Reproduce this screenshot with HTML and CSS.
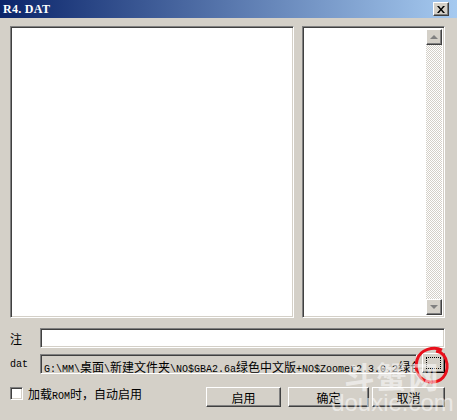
FILE: index.html
```html
<!DOCTYPE html>
<html lang="zh-CN">
<head>
    <meta charset="UTF-8">
    <title>R4. DAT</title>
    <link rel="stylesheet" href="styles.css">
</head>
<body>
    <div class="window">
        <div class="titlebar">
            <span class="title">R4. DAT</span>
            <button class="close-btn">
                <svg width="8" height="7" viewBox="0 0 8 7"><path d="M0 0h2l2 2.5 2-2.5h2l-3 3.5 3 3.5h-2l-2-2.5-2 2.5h-2l3-3.5z" fill="#000"/></svg>
            </button>
        </div>

        <div class="content">
            <div class="lists">
                <div class="listbox main-list"></div>
                <div class="listbox side-list">
                    <div class="scrollbar">
                        <div class="scroll-btn"><span class="arrow up"></span></div>
                        <div class="scroll-track"></div>
                        <div class="scroll-btn"><span class="arrow down"></span></div>
                    </div>
                </div>
            </div>

            <div class="field-row note-row">
                <label class="field-label">注</label>
                <div class="textbox"></div>
            </div>

            <div class="field-row dat-row">
                <label class="field-label mono">dat</label>
                <div class="textbox disabled">
                    <span class="path">G:\MM\<span class="cjk">桌面</span>\<span class="cjk">新建文件夹</span>\NO$GBA2.6a<span class="cjk">绿色中文版</span>+NO$Zoomer2.3.0.2<span class="cjk">绿色</span></span>
                </div>
                <button class="browse-btn"><span class="focus"></span></button>
            </div>

            <div class="bottom-row">
                <label class="check">
                    <span class="checkbox"></span>
                    <span class="check-text">加载<span class="mono">ROM</span>时，自动启用</span>
                </label>
                <div class="buttons">
                    <button class="btn btn-enable">启用</button>
                    <button class="btn btn-ok">确定</button>
                    <button class="btn btn-cancel">取消</button>
                </div>
            </div>
        </div>

        <!-- red mark drawn over the browse button -->
        <svg class="mark" width="40" height="42" viewBox="0 0 40 42">
            <path d="M30 5 C22 1 8 4 5 15 C2 26 8 36 18 37 C29 38 36 30 35 19 C34 11 30 7 24 6" fill="none" stroke="#e8101c" stroke-width="3"/>
        </svg>

        <div class="watermark">
            <div class="wm-big">斗蟹网</div>
            <div class="wm-small">douxie.com</div>
        </div>
    </div>
</body>
</html>
```

FILE: styles.css
```css
body {
    margin: 0;
    padding: 0;
    background: #d4d0c8;
    font-family: "Noto Sans CJK SC", sans-serif;
    font-size: 12px;
    color: #000;
}
.window {
    position: relative;
    width: 457px;
    height: 420px;
    overflow: hidden;
    background: #d4d0c8;
}
.titlebar {
    height: 18px;
    display: flex;
    align-items: center;
    justify-content: space-between;
    padding: 0 8px 0 3px;
    background: linear-gradient(to right, #0a246a, #a6caf0);
}
.title {
    color: #fff;
    font-family: "Liberation Serif", serif;
    font-weight: bold;
    font-size: 12px;
    letter-spacing: 0.3px;
}
.close-btn {
    width: 16px;
    height: 14px;
    padding: 0;
    display: flex;
    align-items: center;
    justify-content: center;
    background: #d4d0c8;
    border: 1px solid;
    border-color: #fff #404040 #404040 #fff;
    box-shadow: inset -1px -1px #808080;
}
.content {
    padding: 8px 12px 0 10px;
}
.lists {
    display: flex;
    gap: 8px;
    height: 292px;
}
.listbox {
    background: #fff;
    border: 1px solid;
    border-color: #808080 #fff #fff #808080;
    box-shadow: inset 1px 1px #404040, inset -1px -1px #d4d0c8;
    box-sizing: border-box;
}
.main-list {
    width: 284px;
}
.side-list {
    flex: 1;
    display: flex;
    justify-content: flex-end;
    padding: 2px;
}
.scrollbar {
    width: 16px;
    display: flex;
    flex-direction: column;
}
.scroll-btn {
    height: 16px;
    box-sizing: border-box;
    display: flex;
    align-items: center;
    justify-content: center;
    background: #d4d0c8;
    border: 1px solid;
    border-color: #fff #404040 #404040 #fff;
    box-shadow: inset -1px -1px #808080;
}
.arrow {
    width: 0;
    height: 0;
    border-left: 4px solid transparent;
    border-right: 4px solid transparent;
}
.arrow.up {
    border-bottom: 4px solid #808080;
}
.arrow.down {
    border-top: 4px solid #808080;
}
.scroll-track {
    flex: 1;
    background: repeating-conic-gradient(#d4d0c8 0 25%, #fff 0 50%) 0 0 / 2px 2px;
}
.field-row {
    display: flex;
    align-items: center;
    height: 20px;
}
.note-row {
    margin-top: 10px;
}
.dat-row {
    margin-top: 6px;
}
.field-label {
    width: 30px;
}
.mono {
    font-family: "Liberation Mono", monospace;
    font-size: 10px;
}
.textbox {
    flex: 1;
    height: 20px;
    box-sizing: border-box;
    background: #fff;
    border: 1px solid;
    border-color: #808080 #fff #fff #808080;
    box-shadow: inset 1px 1px #404040, inset -1px -1px #d4d0c8;
    overflow: hidden;
    white-space: nowrap;
    padding: 3px 0 0 3px;
}
.textbox.disabled {
    background: #d4d0c8;
}
.path {
    font-family: "Liberation Mono", monospace;
    font-size: 10px;
    line-height: 12px;
    color: #000;
}
.cjk {
    font-family: "Noto Sans CJK SC", sans-serif;
    font-size: 12px;
}
.browse-btn {
    width: 23px;
    height: 20px;
    margin-left: 5px;
    margin-top: -2px;
    padding: 3px;
    background: #d4d0c8;
    border: 1px solid;
    border-color: #fff #000 #000 #fff;
    box-shadow: inset -1px -1px #808080;
}
.focus {
    display: block;
    height: 100%;
    box-sizing: border-box;
    border: 1px dotted #000;
}
.bottom-row {
    display: flex;
    justify-content: space-between;
    margin-top: 13px;
    height: 20px;
}
.check {
    display: flex;
    align-items: flex-start;
    gap: 5px;
}
.checkbox {
    width: 13px;
    height: 13px;
    box-sizing: border-box;
    background: #fff;
    border: 1px solid;
    border-color: #808080 #fff #fff #808080;
    box-shadow: inset 1px 1px #404040, inset -1px -1px #d4d0c8;
}
.check-text {
    line-height: 13px;
}
.buttons {
    display: flex;
}
.btn {
    height: 20px;
    padding: 0;
    font-family: "Noto Sans CJK SC", sans-serif;
    font-size: 12px;
    background: #d4d0c8;
    border: 1px solid;
    border-color: #fff #404040 #404040 #fff;
    box-shadow: inset -1px -1px #808080;
}
.btn-enable {
    width: 75px;
}
.btn-ok {
    width: 81px;
    margin-left: 7px;
}
.btn-cancel {
    width: 73px;
    margin-left: 3px;
}
.mark {
    position: absolute;
    left: 412px;
    top: 345px;
}
.watermark {
    position: absolute;
    left: 330px;
    top: 358px;
    width: 125px;
    text-align: center;
    color: rgba(255, 255, 255, 0.55);
    pointer-events: none;
}
.wm-big {
    font-size: 30px;
    line-height: 34px;
    font-weight: bold;
    letter-spacing: 2px;
}
.wm-small {
    font-family: "Liberation Sans", sans-serif;
    font-size: 24px;
    line-height: 22px;
}
```
